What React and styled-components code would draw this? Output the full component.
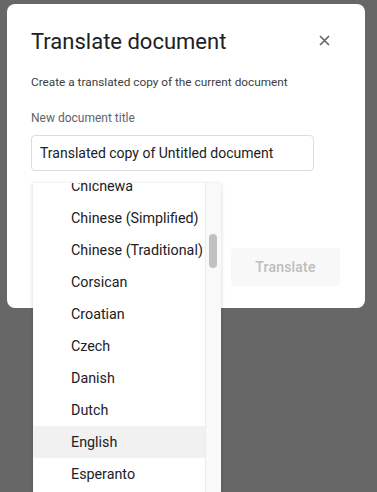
import React from "react";
import styled, { createGlobalStyle } from "styled-components";

const Global = createGlobalStyle`
  html, body { margin: 0; padding: 0; }
  body {
    background: #676767;
    font-family: Roboto, "Noto Sans", "Liberation Sans", sans-serif;
    -webkit-font-smoothing: antialiased;
  }
`;

const Page = styled.div`
  position: relative;
  width: 377px;
  height: 492px;
  overflow: hidden;
  background: #676767;
  padding: 4px 12px 0 7px;
  box-sizing: border-box;
`;

const Dialog = styled.div`
  width: 358px;
  height: 304px;
  box-sizing: border-box;
  background: #fff;
  border-radius: 8px;
  padding: 24px 25px 22px 24px;
  display: flex;
  flex-direction: column;
`;

const TitleRow = styled.div`
  display: flex;
  align-items: center;
  justify-content: space-between;
`;

const Title = styled.h1`
  margin: 0;
  font-size: 22px;
  line-height: 28px;
  font-weight: 400;
  color: #202124;
`;

const CloseButton = styled.button`
  width: 20px;
  height: 20px;
  margin-right: 6px;
  margin-top: -4px;
  padding: 0;
  border: 0;
  background: none;
  display: flex;
  align-items: center;
  justify-content: center;
  color: #5f6368;
`;

const Subtitle = styled.p`
  margin: 18px 0 0;
  font-size: 11.8px;
  line-height: 16px;
  color: #3c4043;
`;

const Label = styled.div`
  margin-top: 20px;
  font-size: 12px;
  line-height: 16px;
  color: #5f6368;
`;

const Input = styled.div`
  margin-top: 9px;
  width: 283px;
  height: 36px;
  box-sizing: border-box;
  border: 1px solid #dadce0;
  border-radius: 4px;
  padding: 0 8px;
  display: flex;
  align-items: center;
  font-size: 14px;
  color: #202124;
`;

const Spacer = styled.div`
  flex: 1;
`;

const Actions = styled.div`
  display: flex;
  justify-content: flex-end;
`;

const PrimaryButton = styled.button`
  width: 109px;
  height: 38px;
  border: 0;
  border-radius: 4px;
  background: #f8f8f8;
  color: #bdbdbd;
  font-family: inherit;
  font-size: 14px;
  font-weight: 500;
  letter-spacing: 0.2px;
`;

const Menu = styled.div`
  position: absolute;
  left: 33px;
  top: 183px;
  width: 188px;
  bottom: 0;
  background: #fff;
  box-shadow: 0 1px 4px rgba(0, 0, 0, 0.18);
  display: flex;
  overflow: hidden;
`;

const List = styled.ul`
  list-style: none;
  margin: -13px 0 0;
  padding: 0;
  flex: 1;
`;

const Item = styled.li`
  height: 32px;
  display: flex;
  align-items: center;
  padding-left: 38px;
  font-size: 14.3px;
  color: #202124;
  background: ${(p) => (p.$active ? "#f1f1f1" : "transparent")};
`;

const Track = styled.div`
  position: relative;
  width: 16px;
  background: #f9f9f9;
  border-left: 1px solid #ececec;
  box-sizing: border-box;
`;

const Thumb = styled.div`
  position: absolute;
  left: 3px;
  top: 51px;
  width: 8px;
  height: 34px;
  border-radius: 4px;
  background: #c1c1c1;
`;

const languages = [
  "Chichewa",
  "Chinese (Simplified)",
  "Chinese (Traditional)",
  "Corsican",
  "Croatian",
  "Czech",
  "Danish",
  "Dutch",
  "English",
  "Esperanto",
];

export default function App() {
  return (
    <Page>
      <Global />
      <Dialog>
        <TitleRow>
          <Title>Translate document</Title>
          <CloseButton aria-label="Close">
            <svg width="11" height="11" viewBox="0 0 11 11">
              <path d="M1 1L10 10M10 1L1 10" stroke="currentColor" strokeWidth="1.6" />
            </svg>
          </CloseButton>
        </TitleRow>
        <Subtitle>Create a translated copy of the current document</Subtitle>
        <Label>New document title</Label>
        <Input>Translated copy of Untitled document</Input>
        <Spacer />
        <Actions>
          <PrimaryButton>Translate</PrimaryButton>
        </Actions>
      </Dialog>
      <Menu>
        <List>
          {languages.map((l) => (
            <Item key={l} $active={l === "English"}>
              {l}
            </Item>
          ))}
        </List>
        <Track>
          <Thumb />
        </Track>
      </Menu>
    </Page>
  );
}
